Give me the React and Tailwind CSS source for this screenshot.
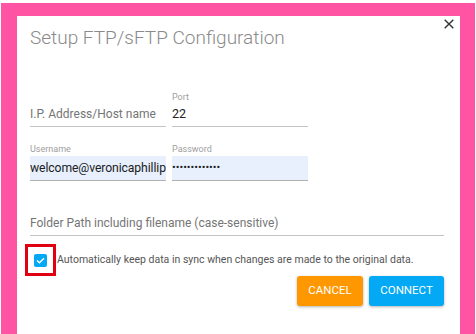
export default function App() {
  return (
    <div className="w-[476px] h-[334px] bg-white pt-[3px] pl-[1px] pr-[1px] overflow-hidden" style={{ fontFamily: "Roboto, 'Liberation Sans', sans-serif" }}>
      <div className="bg-[#ff54a4] h-[331px] pt-[13px] pl-[16px] pr-[15px]">
        <div className="relative bg-white h-[318px] pl-[13px] pr-[16px]">
          <button className="absolute right-[6px] top-[3px] w-[10px] h-[10px] flex items-center justify-center">
            <svg width="10" height="10" viewBox="0 0 10 10">
              <path d="M0.7 0.7 L9.3 9.3 M9.3 0.7 L0.7 9.3" stroke="#333" strokeWidth="1.4" fill="none" />
            </svg>
          </button>
          <div className="pt-[10px] text-[19px] leading-[24px] font-light text-[#8a8a8a]">Setup FTP/sFTP Configuration</div>
          <div className="mt-[42px] flex gap-[6px]">
            <div className="w-[136px]">
              <div className="h-[10px]"></div>
              <div className="h-[25px] border-b border-[#c4c4c4] text-[12px] leading-[24px] text-[#757575] whitespace-nowrap overflow-hidden">I.P. Address/Host name</div>
            </div>
            <div className="w-[136px]">
              <div className="h-[10px] text-[9px] leading-[10px] text-[#9e9e9e]">Port</div>
              <div className="h-[25px] border-b border-[#c4c4c4] text-[12.5px] leading-[24px] text-[#212121]">22</div>
            </div>
          </div>
          <div className="mt-[17px] flex gap-[6px]">
            <div className="w-[136px]">
              <div className="h-[10px] text-[9px] leading-[10px] text-[#9e9e9e]">Username</div>
              <div className="mt-[2px] h-[25px] bg-[#e8f0fe] border-b border-[#b0b0b0] text-[12.2px] tracking-[-0.1px] leading-[24px] text-[#212121] whitespace-nowrap overflow-hidden">welcome@veronicaphillip</div>
            </div>
            <div className="w-[136px]">
              <div className="h-[10px] text-[9px] leading-[10px] text-[#9e9e9e]">Password</div>
              <div className="mt-[2px] h-[25px] bg-[#e8f0fe] border-b border-[#b0b0b0] flex items-center">
                <input type="password" readOnly value="xxxxxxxxxxxxx" className="w-full bg-transparent outline-none text-[11px] text-[#212121] p-0" />
              </div>
            </div>
          </div>
          <div className="mt-[30px] h-[25px] border-b border-[#c4c4c4] text-[12px] leading-[24px] text-[#757575]">Folder Path including filename (case-sensitive)</div>
          <div className="mt-[8px] flex items-center">
            <div className="ml-[-5px] w-[31px] h-[32px] border-[3px] border-[#e0000f] flex items-center justify-center">
              <div className="w-[13px] h-[13px] rounded-[2px] bg-[#03a9f4] flex items-center justify-center">
                <svg width="9" height="7" viewBox="0 0 9 7">
                  <path d="M1 3.5 L3.4 5.8 L8 1.2" stroke="white" strokeWidth="1.5" fill="none" />
                </svg>
              </div>
            </div>
            <div className="ml-[1px] text-[10.5px] leading-[14px] text-[#555]">Automatically keep data in sync when changes are made to the original data.</div>
          </div>
          <div className="mt-[0px] flex justify-end gap-[6px]">
            <button className="w-[66px] h-[30px] rounded-[3px] bg-[#ff9800] text-white text-[11.5px] shadow-[0_1px_3px_rgba(0,0,0,0.3)]">CANCEL</button>
            <button className="w-[75px] h-[30px] rounded-[3px] bg-[#03a9f4] text-white text-[11.5px] shadow-[0_1px_3px_rgba(0,0,0,0.3)]">CONNECT</button>
          </div>
        </div>
      </div>
    </div>
  );
}
